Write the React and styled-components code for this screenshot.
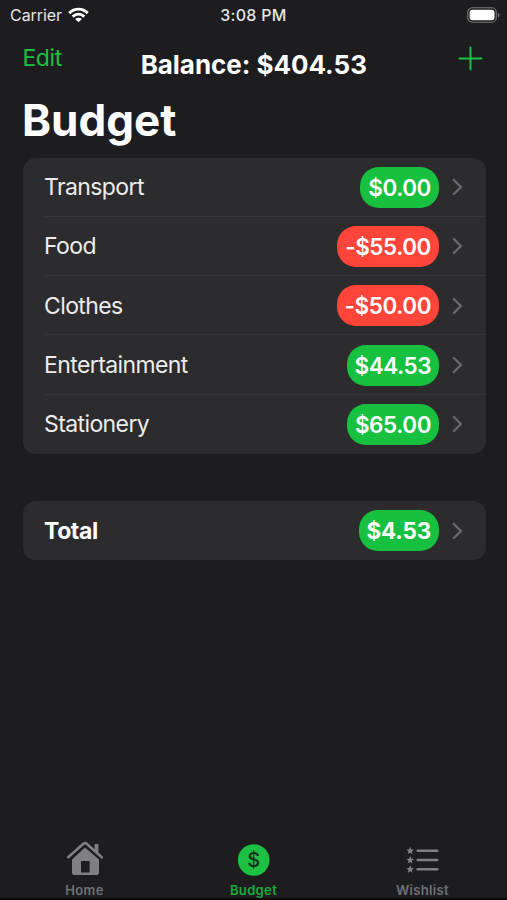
import React from 'react';
import styled, { createGlobalStyle } from 'styled-components';

const GlobalStyle = createGlobalStyle`
  * {
    box-sizing: border-box;
  }

  body {
    margin: 0;
    background: #1d1d1f;
  }
`;

const Screen = styled.div`
  display: flex;
  flex-direction: column;
  width: 507px;
  height: 900px;
  background: #1d1d1f;
  border-bottom: 2px solid #0d070a;
  color: white;
  font-family: Inter, 'Liberation Sans', sans-serif;
  overflow: hidden;
`;

const StatusBar = styled.div`
  display: grid;
  grid-template-columns: 1fr auto 1fr;
  align-items: center;
  height: 30px;
  padding: 0 7px 0 10px;
  color: #e6e6e6;
  font-size: 16px;
`;

const Carrier = styled.div`
  display: flex;
  align-items: center;
  gap: 6px;
  letter-spacing: -0.05px;
`;

const Clock = styled.div`
  margin-left: -3px;
  font-weight: 500;
  letter-spacing: 0.3px;
`;

const BatteryIcon = styled.svg`
  justify-self: end;
`;

const NavBar = styled.div`
  display: grid;
  grid-template-columns: 1fr auto 1fr;
  height: 62px;
  padding: 0 24px 0 22.5px;
`;

const NavButton = styled.button`
  justify-self: ${ p => p.$end ? 'end' : 'start' };
  height: 56px;
  padding: 0;
  border: none;
  background: none;
  color: #1cc143;
  font: inherit;
  font-size: 23px;
  letter-spacing: -0.45px;

  svg {
    display: block;
  }
`;

const Balance = styled.div`
  padding: 19px 0 0 2px;
  font-size: 26px;
  line-height: 32px;
  font-weight: 650;
  letter-spacing: -0.05px;
`;

const Title = styled.h1`
  margin: 0;
  padding-left: 22px;
  height: 65.5px;
  font-size: 44px;
  line-height: 56px;
  font-weight: 700;
  letter-spacing: 0;
`;

const Content = styled.div`
  flex: 1;
  display: flex;
  flex-direction: column;
  gap: 47px;
  padding: 0 21.5px 0 22.5px;
`;

const Card = styled.div`
  border-radius: 13px;
  background: #2c2c2e;
`;

const Row = styled.div`
  display: flex;
  align-items: center;
  height: 59.3px;
  margin-left: 21.5px;
  padding: 0 22.5px 0 0;

  & + & {
    box-shadow: 0 -1px 0 #363638;
  }
`;

const Label = styled.div`
  flex: 1;
  color: ${ p => p.$bold ? '#fff' : '#ececec' };
  font-size: 23px;
  font-weight: ${ p => p.$bold ? 650 : 400 };
  letter-spacing: ${ p => p.$bold ? -0.4 : -0.6 }px;
`;

const Amount = styled.div`
  height: 41px;
  margin-right: 13.5px;
  padding: 0 7.5px 0 8px;
  border-radius: 19px;
  background: ${ p => p.$negative ? '#ff443a' : '#18c03f' };
  font-size: 22.4px;
  line-height: 41px;
  font-weight: ${ p => p.$bold ? 650 : 600 };
  letter-spacing: ${ p => p.$bold ? -0.15 : -0.4 }px;
`;

const TabBar = styled.div`
  display: grid;
  grid-template-columns: repeat(3, 1fr);
  height: 60px;
`;

const Tab = styled.div`
  display: flex;
  flex-direction: column;
  align-items: center;
  color: ${ p => p.$active ? '#1cc143' : '#808083' };
  font-size: 13px;
  line-height: 16px;
  font-weight: 600;
  letter-spacing: 0.35px;

  svg {
    display: block;
    margin-top: 2px;
  }

  span {
    opacity: .85;
  }
`;

const budgets = [
  { name: 'Transport', amount: '$0.00' },
  { name: 'Food', amount: '-$55.00' },
  { name: 'Clothes', amount: '-$50.00' },
  { name: 'Entertainment', amount: '$44.53' },
  { name: 'Stationery', amount: '$65.00' },
];

const WifiIcon = () => (
  <svg width="21" height="16" viewBox="0 0 21 16" fill="none" stroke="#fff" strokeWidth="2.9">
    <path d="M1.2 6.1C6.5.8 14.5.8 19.8 6.1" />
    <path d="M4.7 9.6C8 6.3 13 6.3 16.3 9.6" />
    <path d="M10.5 15.2 7.2 12c1.8-1.7 4.8-1.7 6.6 0z" fill="#fff" stroke="none" />
  </svg>
);

const Battery = () => (
  <BatteryIcon width="33" height="16" viewBox="0 0 33 16">
    <rect x=".75" y=".75" width="28.5" height="14.5" rx="4.5" fill="none" stroke="#77777a" strokeWidth="1.2" />
    <rect x="2.7" y="2.7" width="24.8" height="10.6" rx="2.8" fill="#fff" />
    <path d="M31 5.7c2 .8 2 3.8 0 4.6z" fill="#77777a" />
  </BatteryIcon>
);

const Chevron = () => (
  <svg width="11" height="18" viewBox="0 0 11 18" fill="none" stroke="#69696c" strokeWidth="2.4" strokeLinecap="round" strokeLinejoin="round">
    <path d="M1.8 2 9 9l-7.2 7" />
  </svg>
);

const HomeIcon = () => (
  <svg width="38" height="42" viewBox="0 0 38 42" fill="currentColor">
    <path d="M2.2 17.2 17.7 3.6a2 2 0 0 1 2.6 0L35.8 17.2" fill="none" stroke="currentColor" strokeWidth="2.6" strokeLinecap="round" />
    <path d="M28.6 4h3.8v10.3l-3.8-3.2z" />
    <path fillRule="evenodd" d="M19 7.4 33 19.4v12.8a2.8 2.8 0 0 1-2.8 2.8H8.8A2.8 2.8 0 0 1 6 32.2V19.4zM15 21V32.4h8.6V21z" />
  </svg>
);

const DollarIcon = () => (
  <svg width="38" height="42" viewBox="0 0 38 42">
    <circle cx="18.7" cy="20" r="15.8" fill="currentColor" />
    <text x="18.7" y="27.2" textAnchor="middle" fontSize="20" fontWeight="500" letterSpacing="0" fill="#123018">$</text>
  </svg>
);

const star = 'M0-4 1.1-1.3 3.8-1.1 1.7.8 2.4 3.4 0 2-2.4 3.4-1.7.8-3.8-1.1-1.1-1.3z';

const WishlistIcon = () => (
  <svg width="38" height="42" viewBox="0 0 38 42" fill="currentColor">
    {
      [10.7, 20, 29.3].map(y => (
        <g key={ y }>
          <path transform={ `translate(6.2 ${ y })` } d={ star } />
          <rect x="12.5" y={ y - 1.3 } width="22" height="2.6" rx="1.3" />
        </g>
      ))
    }
  </svg>
);

const BudgetRow = ({ name, amount, bold }) => (
  <Row>
    <Label $bold={ bold }>{ name }</Label>
    <Amount $bold={ bold } $negative={ amount.startsWith('-') }>{ amount }</Amount>
    <Chevron />
  </Row>
);

export default () => {
  return <Screen>
    <GlobalStyle />
    <StatusBar>
      <Carrier>Carrier <WifiIcon /></Carrier>
      <Clock>3:08 PM</Clock>
      <Battery />
    </StatusBar>
    <NavBar>
      <NavButton>Edit</NavButton>
      <Balance>Balance: $404.53</Balance>
      <NavButton $end aria-label="Add">
        <svg width="25" height="25" viewBox="0 0 25 25" stroke="currentColor" strokeWidth="2" strokeLinecap="round">
          <path d="M12.5 1.5v22M1.5 12.5h22" />
        </svg>
      </NavButton>
    </NavBar>
    <Title>Budget</Title>
    <Content>
      <Card>
        { budgets.map(b => <BudgetRow key={ b.name } { ...b } />) }
      </Card>
      <Card>
        <BudgetRow name="Total" amount="$4.53" bold />
      </Card>
    </Content>
    <TabBar>
      <Tab><HomeIcon /><span>Home</span></Tab>
      <Tab $active><DollarIcon /><span>Budget</span></Tab>
      <Tab><WishlistIcon /><span>Wishlist</span></Tab>
    </TabBar>
  </Screen>
}
